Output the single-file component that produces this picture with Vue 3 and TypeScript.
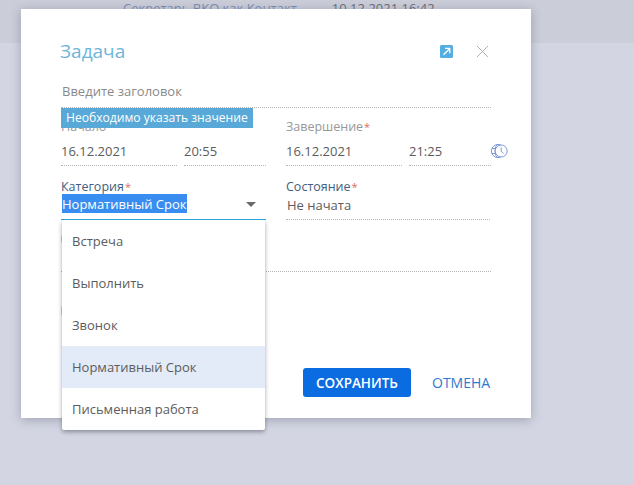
<script setup lang="ts">
const options: { label: string; active?: boolean }[] = [
  { label: 'Встреча' },
  { label: 'Выполнить' },
  { label: 'Звонок' },
  { label: 'Нормативный Срок', active: true },
  { label: 'Письменная работа' },
]
</script>

<template>
  <div class="page">
    <div class="band">
      <span class="band-link">Секретарь ВКО как Контакт</span>
      <span class="band-date">10.12.2021 16:42</span>
    </div>

    <div class="dialog">
      <header class="head">
        <h1 class="title">Задача</h1>
        <svg class="expand" width="14" height="14" viewBox="0 0 14 14">
          <rect x="0" y="0" width="13" height="13" rx="1.5" fill="#55aee0" />
          <path d="M3.5 9.8 9.6 3.7M5 3.4h4.8v4.8" fill="none" stroke="#fff" stroke-width="1.3" />
        </svg>
        <svg class="close" width="13" height="13" viewBox="0 0 13 13">
          <path d="M1 1l11 11M12 1 1 12" fill="none" stroke="#a9a9a9" stroke-width="0.9" />
        </svg>
      </header>

      <div class="subject">Введите заголовок</div>

      <div class="dates">
        <div class="cell">
          <div class="label muted">Начало</div>
          <div class="value dotted">16.12.2021</div>
        </div>
        <div class="cell">
          <div class="label">&nbsp;</div>
          <div class="value dotted">20:55</div>
        </div>
        <div class="cell">
          <div class="label muted">Завершение<span class="req">*</span></div>
          <div class="value dotted">16.12.2021</div>
        </div>
        <div class="cell">
          <div class="label">&nbsp;</div>
          <div class="value dotted">21:25</div>
        </div>
        <svg class="globe" width="17" height="16" viewBox="0 0 17 16">
          <g fill="none" stroke="#6f90d2" stroke-width="0.9">
            <circle cx="7" cy="8" r="6.6" />
            <ellipse cx="7" cy="8" rx="3" ry="6.6" />
            <path d="M1 5.5h12M1 10.5h12" />
          </g>
          <circle cx="10.2" cy="8" r="6" fill="#fff" stroke="#6f90d2" stroke-width="0.9" />
          <path d="M10.2 4.4v3.8l2.4 2.1" fill="none" stroke="#6f90d2" stroke-width="0.9" />
        </svg>
      </div>

      <div class="selects">
        <div class="cell">
          <div class="label navy">Категория<span class="req">*</span></div>
          <div class="value combo">
            <span class="selected">Нормативный Срок</span>
            <i class="caret"></i>
          </div>
        </div>
        <div class="cell">
          <div class="label navy">Состояние<span class="req">*</span></div>
          <div class="value dotted plain">Не начата</div>
        </div>
      </div>

      <div class="hidden-row dotted">
        <i class="peek"></i>
      </div>
      <div class="check-row">
        <i class="peek"></i>
      </div>

      <footer class="foot">
        <button class="save" type="button">СОХРАНИТЬ</button>
        <button class="cancel" type="button">ОТМЕНА</button>
      </footer>

      <div class="tip">Необходимо указать значение</div>

      <ul class="menu">
        <li v-for="o in options" :key="o.label" class="opt" :class="{ on: o.active }">{{ o.label }}</li>
      </ul>
    </div>
  </div>
</template>

<style>
html,
body {
  margin: 0;
  background: #d3d6e2;
}
</style>

<style scoped>
.page {
  position: relative;
  width: 634px;
  height: 485px;
  overflow: hidden;
  background: #d3d6e2;
  font-family: "Open Sans", sans-serif;
  font-size: 13px;
  color: #555;
}
.band {
  height: 43px;
  box-sizing: border-box;
  padding: 1px 0 0 123px;
  background: #cbced9;
  display: flex;
  gap: 35px;
  line-height: 14px;
  font-size: 13px;
}
.band-link {
  color: #7d8fb5;
}
.band-date {
  color: #6d7078;
}
.dialog {
  position: absolute;
  left: 21px;
  top: 9px;
  width: 510px;
  height: 409px;
  box-sizing: border-box;
  padding: 29px 40px 21px;
  display: flex;
  flex-direction: column;
  background: #fff;
  box-shadow: 0 2px 10px rgba(40, 44, 70, 0.3);
}
.head {
  height: 26px;
  display: flex;
  align-items: center;
}
.title {
  margin: 0 0 0 -1px;
  flex: 1;
  font-size: 19px;
  font-weight: 400;
  line-height: 26px;
  color: #6db5da;
}
.expand {
  margin-right: 22px;
  margin-top: 1px;
}
.close {
  margin-right: 2px;
  margin-top: 1px;
}
.subject {
  margin-top: 16px;
  height: 27px;
  line-height: 22px;
  padding-left: 1px;
  border-bottom: 1px dotted #b5b5b5;
  color: #8a8a8a;
}
.dates {
  position: relative;
  margin-top: 10px;
  display: grid;
  grid-template-columns: 116px 82px 116px 82px;
  column-gap: 7px;
}
.dates .value {
  height: 30px;
  padding-top: 4px;
}
.dates .cell:nth-child(3),
.dates .cell:nth-child(4) {
  margin-left: 13px;
  margin-right: -13px;
}
.label {
  height: 18px;
  line-height: 18px;
  font-size: 12.5px;
}
.muted {
  color: #989898;
}
.navy {
  color: #3f6080;
}
.req {
  color: #e26a5c;
  font-size: 11px;
  margin-left: 1px;
}
.value {
  box-sizing: border-box;
  height: 29px;
  padding-top: 3px;
  line-height: 22px;
  color: #5c5c5c;
}
.dotted {
  border-bottom: 1px dotted #b5b5b5;
}
.globe {
  position: absolute;
  left: 430px;
  top: 25px;
}
.selects {
  margin-top: 12px;
  display: grid;
  grid-template-columns: 205px 204px;
  column-gap: 20px;
}
.selects .label {
  height: 16px;
}
.selects .value {
  height: 26px;
  padding-top: 1px;
  line-height: 20px;
}
.plain {
  padding-left: 1px;
}
.combo {
  position: relative;
  z-index: 2;
  padding-left: 1px;
  border-bottom: 1px solid #28a3d8;
}
.selects .combo {
  padding-top: 0;
}
.selected {
  display: inline-block;
  background: #3a8df0;
  color: #fff;
  padding-top: 1px;
  line-height: 18px;
}
.caret {
  position: absolute;
  right: 10px;
  top: 8px;
  border-style: solid;
  border-width: 5px 5px 0;
  border-color: #6a6a6a transparent transparent;
}
.hidden-row {
  height: 51px;
  position: relative;
}
.check-row {
  height: 52px;
  position: relative;
}
.peek {
  position: absolute;
  left: 0;
  top: 14px;
  width: 10px;
  height: 8px;
  border: 1px solid #d2d2d2;
  border-radius: 3px;
}
.check-row .peek {
  top: 33px;
  height: 10px;
}
.foot {
  margin-top: auto;
  display: flex;
  justify-content: flex-end;
  align-items: center;
}
.save {
  width: 108px;
  height: 29px;
  border: 0;
  border-radius: 3px;
  background: #0a6ce0;
  color: #fff;
  font: 600 13.5px "Open Sans", sans-serif;
  padding: 0;
}
.cancel {
  margin-left: 21px;
  width: 58px;
  padding: 0;
  border: 0;
  background: none;
  color: #2f78d0;
  font: 400 14px "Open Sans", sans-serif;
  white-space: nowrap;
  margin-right: 1px;
}
.tip {
  position: absolute;
  left: 40px;
  top: 99px;
  width: 192px;
  height: 20px;
  box-sizing: border-box;
  padding-left: 5px;
  background: #58a9d8;
  color: #fff;
  font-size: 12.1px;
  line-height: 20px;
  white-space: nowrap;
}
.menu {
  position: absolute;
  left: 41px;
  top: 211px;
  width: 203px;
  margin: 0;
  padding: 0;
  list-style: none;
  background: #fff;
  border-radius: 2px;
  box-shadow: 0 2px 4px rgba(30, 30, 50, 0.4);
  clip-path: inset(0 -8px -8px -8px);
}
.opt {
  height: 42px;
  line-height: 42px;
  padding-left: 10px;
  color: #5c5c5c;
}
.opt.on {
  background: #e3eaf8;
}
</style>
